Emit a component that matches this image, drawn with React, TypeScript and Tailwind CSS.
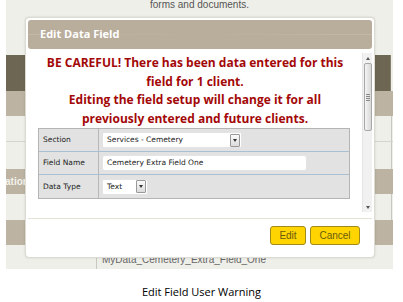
import React from "react"

const verdana = { fontFamily: '"DejaVu Sans", Verdana, sans-serif' }

function SelectBox({ value, width }: { value: string; width: string }) {
  return (
    <div className={`${width} h-[16px] flex items-center justify-between bg-white border border-[#e4e4e4] rounded-[2px] pl-[4px] pr-[1px]`}>
      <span className="text-[7.5px] text-[#222]" style={verdana}>{value}</span>
      <div className="w-[10px] h-[13px] border border-[#999] rounded-[1px] bg-gradient-to-b from-[#fafafa] to-[#dcdcdc] flex items-center justify-center">
        <div className="w-0 h-0 border-l-[2.5px] border-r-[2.5px] border-t-[3px] border-l-transparent border-r-transparent border-t-[#333]" />
      </div>
    </div>
  )
}

function FieldRow({ label, children, last }: { label: string; children: React.ReactNode; last?: boolean }) {
  return (
    <div className={`flex h-[23px] ${last ? "" : "border-b border-[#a9bfd4]"}`}>
      <div className="w-[60px] shrink-0 border-r border-[#b8b8b8] flex items-center pl-[4px] text-[7.5px] text-[#222]" style={verdana}>
        {label}
      </div>
      <div className="flex-1 flex items-center pl-[3px]">{children}</div>
    </div>
  )
}

export default function App() {
  return (
    <div className="w-[403px] h-[302px] bg-white overflow-hidden" style={{ fontFamily: '"Liberation Sans", Arial, sans-serif' }}>
      {/* Screenshot area */}
      <div className="relative ml-[6px] w-[387px] h-[269px] bg-[#efefe9] overflow-hidden">
        {/* Background page */}
        <div className="flex flex-col">
          <div className="h-[55px] flex justify-center">
            <span className="-mt-[2px] text-[10px] text-[#555] leading-[13px]">forms and documents.</span>
          </div>
          <div className="h-[36px] bg-[#6d6653] border-r border-[#85806e] mr-[2px]" />
          <div className="h-[25px] bg-[#bcb3a2]" />
          <div className="h-[26px] border-b border-[#d4d4cc] flex justify-end"><div className="w-[2px] border-l border-[#c8c8c0]" /></div>
          <div className="h-[27px] flex justify-end"><div className="w-[2px] border-l border-[#c8c8c0]" /></div>
          <div className="h-[25px] bg-[#bcb3a2] flex items-center">
            <span className="text-[10px] font-bold text-[#f4f2ec] -ml-[1px]">ation</span>
          </div>
          <div className="h-[26px] flex justify-end"><div className="w-[2px] border-l border-[#c8c8c0]" /></div>
          <div className="h-[25px] bg-[#bcb3a2]" />
          <div className="h-[24px] flex">
            <div className="w-[91px] border-r border-[#c8c8c0]" />
            <span className="pl-[5px] pt-[7px] text-[10px] text-[#666]">MyData_Cemetery_Extra_Field_One</span>
          </div>
        </div>

        {/* Dialog */}
        <div className="absolute left-[19px] top-[17px] w-[350px] h-[241px] bg-white border border-[#dcdcd4] rounded-[4px] shadow-[0_0_2px_rgba(0,0,0,0.15)] p-[2px] flex flex-col">
          <div className="relative h-[29px] shrink-0 bg-[#b9ad9c] rounded-[3px] flex items-center pl-[12px] overflow-hidden">
            <div className="absolute left-0 right-0 top-[14px] h-px bg-gradient-to-r from-[#c8bdae] via-[#b9ad9c] to-[#c8bdae] opacity-70" />
            <span className="relative text-[11px] font-bold text-white bg-[#b9ad9c] pr-[2px]" style={{ fontFamily: '"Open Sans", sans-serif' }}>Edit Data Field</span>
          </div>

          <div className="h-[164px] flex">
            <div className="flex-1 flex flex-col items-center pt-[5px]">
              <div className="text-center text-[12px] leading-[18.5px] font-bold text-[#a30808]" style={{ fontFamily: '"Open Sans", sans-serif' }}>
                <div>BE CAREFUL! There has been data entered for this</div>
                <div>field for 1 client.</div>
                <div>Editing the field setup will change it for all</div>
                <div>previously entered and future clients.</div>
              </div>
              <div className="self-start ml-[10px] w-[312px] bg-[#e2e2e2] border border-[#b4b4b4]">
                <FieldRow label="Section">
                  <SelectBox value="Services - Cemetery" width="w-[140px]" />
                </FieldRow>
                <FieldRow label="Field Name">
                  <div className="w-[205px] h-[16px] bg-white border border-[#e4e4e4] rounded-[3px] flex items-center pl-[4px] text-[7.5px] text-[#222]" style={verdana}>
                    Cemetery Extra Field One
                  </div>
                </FieldRow>
                <FieldRow label="Data Type" last>
                  <SelectBox value="Text" width="w-[46px]" />
                </FieldRow>
              </div>
            </div>

            {/* Scrollbar */}
            <div className="w-[10px] mt-[4px] mb-[1px] bg-[#f1f1f1] border-l border-[#e6e6e6] flex flex-col items-center">
              <div className="h-[10px] flex items-center justify-center">
                <div className="w-0 h-0 border-l-[2.5px] border-r-[2.5px] border-b-[3px] border-l-transparent border-r-transparent border-b-[#555]" />
              </div>
              <div className="w-[8px] h-[68px] border border-[#a8a8a8] rounded-[2px] bg-gradient-to-r from-[#f4f4f4] to-[#d8d8d8] flex items-center justify-center">
                <div className="flex flex-col gap-[1px]">
                  <div className="w-[4px] h-px bg-[#888]" />
                  <div className="w-[4px] h-px bg-[#888]" />
                  <div className="w-[4px] h-px bg-[#888]" />
                  <div className="w-[4px] h-px bg-[#888]" />
                </div>
              </div>
              <div className="flex-1" />
              <div className="h-[10px] flex items-center justify-center">
                <div className="w-0 h-0 border-l-[2.5px] border-r-[2.5px] border-t-[3px] border-l-transparent border-r-transparent border-t-[#555]" />
              </div>
            </div>
          </div>

          <div className="mt-[5px] border-t border-[#e2e2d6] flex justify-end gap-[4px] pt-[7px] pr-[12px]">
            <button className="w-[36px] h-[19px] bg-[#ffd400] border border-[#a08a1c] rounded-[3px] text-[10px] text-[#6a5a10]">Edit</button>
            <button className="w-[50px] h-[19px] bg-[#ffd400] border border-[#a08a1c] rounded-[3px] text-[10px] text-[#6a5a10]">Cancel</button>
          </div>
        </div>
      </div>

      {/* Caption */}
      <div className="h-[33px] flex items-center justify-center pt-[14px]">
        <span className="text-[11px] text-black" style={{ fontFamily: '"Open Sans", sans-serif' }}>Edit Field User Warning</span>
      </div>
    </div>
  )
}
